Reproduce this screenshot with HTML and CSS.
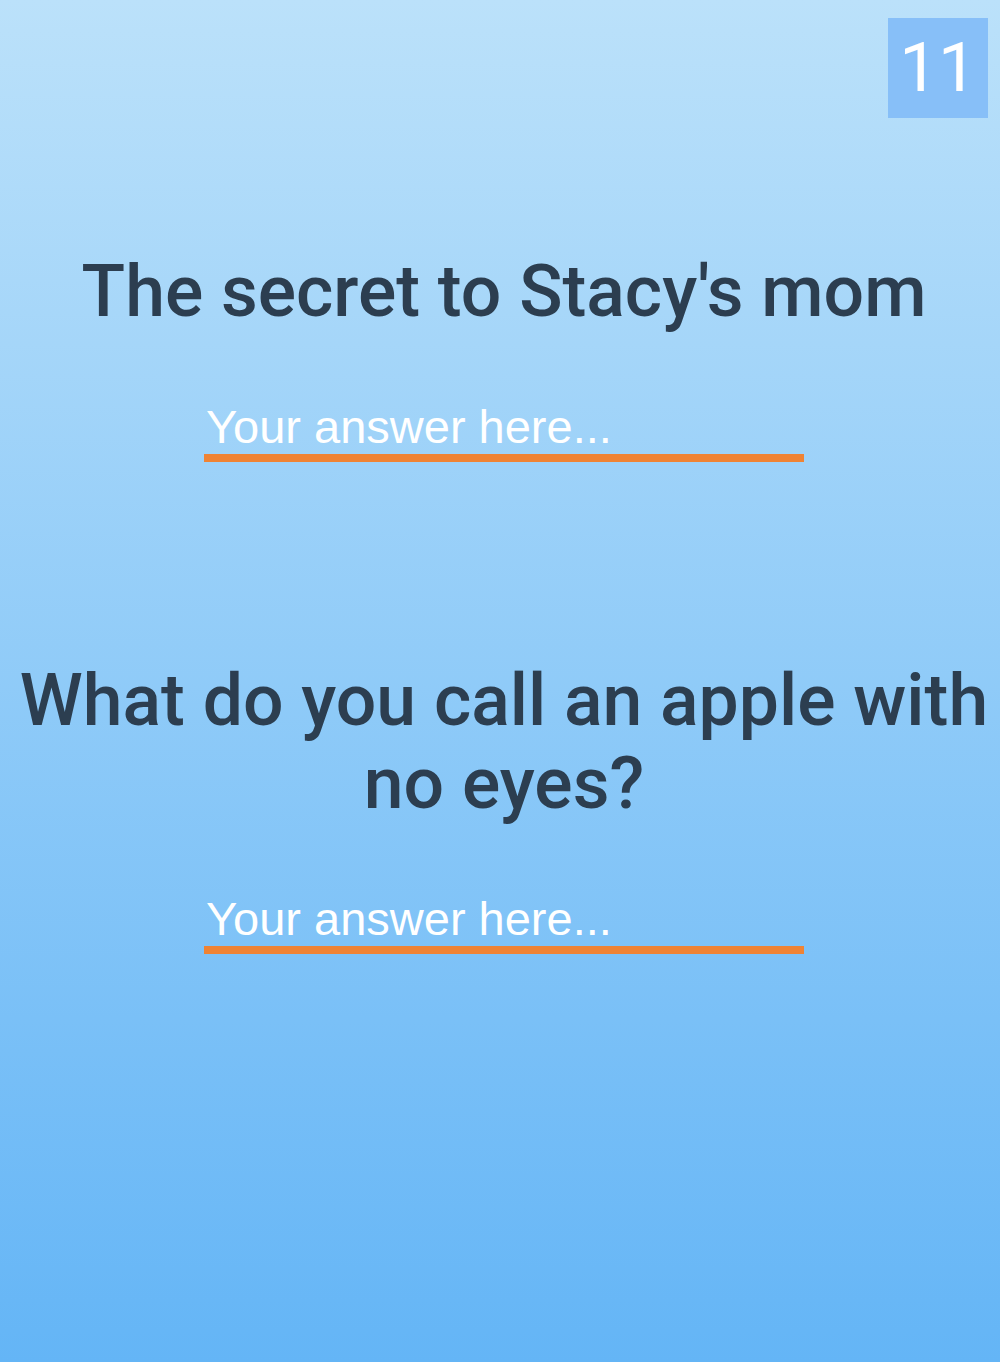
FILE: index.html
```html
<!DOCTYPE html>
<html lang="en">
<head>
<meta charset="utf-8">
<title>Quiz</title>
<link rel="stylesheet" href="styles.css">
</head>
<body>
<div class="page">
  <div class="badge">11</div>
  <section class="question q1">
    <h1 class="title">The secret to Stacy's mom</h1>
    <input class="answer" type="text" placeholder="Your answer here...">
  </section>
  <section class="question q2">
    <h1 class="title">What do you call an apple with no eyes?</h1>
    <input class="answer" type="text" placeholder="Your answer here...">
  </section>
</div>
</body>
</html>
```
FILE: styles.css
```css
html, body {
  margin: 0;
  padding: 0;
}
body {
  font-family: Roboto, "Liberation Sans", sans-serif;
}
.page {
  position: relative;
  min-height: 1362px;
  box-sizing: border-box;
  background: linear-gradient(to bottom, #bbe1fa, #64b5f6);
  padding: 250px 0 0 8px;
  display: flex;
  flex-direction: column;
  align-items: center;
}
.badge {
  position: absolute;
  top: 18px;
  right: 12px;
  width: 100px;
  height: 100px;
  background: #87bff8;
  color: #fff;
  font-size: 69px;
  line-height: 100px;
  text-align: center;
}
.question {
  display: flex;
  flex-direction: column;
  align-items: center;
  width: 100%;
}
.q2 {
  margin-top: 197px;
}
.title {
  margin: 0;
  font-size: 71.5px;
  font-weight: 500;
  line-height: 83px;
  color: #2c3e50;
  text-align: center;
}
.answer {
  margin-top: 67px;
  width: 600px;
  box-sizing: border-box;
  background: transparent;
  border: none;
  border-bottom: 8px solid #ef8334;
  padding: 0 2px;
  font-family: "Liberation Sans", Arial, sans-serif;
  font-size: 47px;
  line-height: 54px;
  color: #fff;
  outline: none;
}
.answer::placeholder {
  color: #fff;
  opacity: 1;
}
```
